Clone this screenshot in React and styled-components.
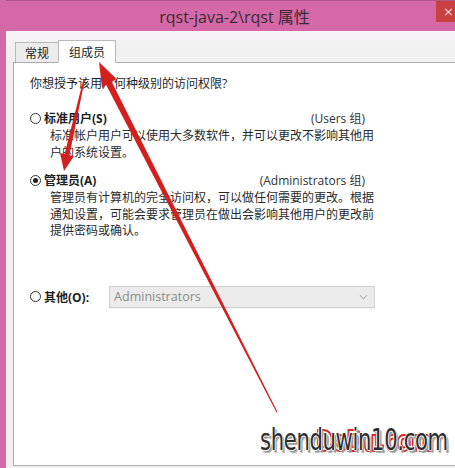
import React from 'react';
import styled, { createGlobalStyle } from 'styled-components';

const GlobalStyle = createGlobalStyle`
  html, body {
    margin: 0;
    padding: 0;
    width: 455px;
    height: 468px;
    overflow: hidden;
  }
  body {
    font-family: "Open Sans", "Noto Sans CJK SC", sans-serif;
    font-size: 12px;
    color: #1e1e1e;
  }
`;

const font = `"Open Sans", "Noto Sans CJK SC", sans-serif`;

const App = () => {
  return (
    <>
      <GlobalStyle />
      <Window>
        <TitleBar>
          <Title>rqst-java-2\rqst 属性</Title>
          <CloseButton>×</CloseButton>
        </TitleBar>
        <Client>
          <Tabs>
            <Tab>常规</Tab>
            <Tab $active>组成员</Tab>
          </Tabs>
          <Panel>
            <Question>你想授予该用户何种级别的访问权限?</Question>

            <Option>
              <OptionHead>
                <Radio />
                <Label>标准用户(S)</Label>
                <Group>(Users 组)</Group>
              </OptionHead>
              <Desc>
                标准帐户用户可以使用大多数软件，并可以更改不影响其他用
                <br />
                户的系统设置。
              </Desc>
            </Option>

            <Option $top={10}>
              <OptionHead>
                <Radio $checked />
                <Label>管理员(A)</Label>
                <Group>(Administrators 组)</Group>
              </OptionHead>
              <Desc>
                管理员有计算机的完全访问权，可以做任何需要的更改。根据
                <br />
                通知设置，可能会要求管理员在做出会影响其他用户的更改前
                <br />
                提供密码或确认。
              </Desc>
            </Option>

            <OtherRow>
              <Radio />
              <Label>其他(O):</Label>
              <Select>
                <span>Administrators</span>
                <Chevron viewBox="0 0 10 6">
                  <path d="M1 1l4 4 4-4" fill="none" stroke="#b5b5b5" strokeWidth="1.2" />
                </Chevron>
              </Select>
            </OtherRow>
          </Panel>
        </Client>

        <Arrows viewBox="0 0 455 468">
          <polygon
            fill="#d41f1f"
            points="99,62 116.5,79 111.8,82 277.5,412 276.5,412.5 106.2,85 102,88"
          />
          <polygon
            fill="#d41f1f"
            points="64,171 60,153 64.6,154 83.3,80 84.7,80.3 69.4,155.2 74,156"
          />
        </Arrows>

        <Watermark>
          <Shadow>DeDu.com</Shadow>
          <Mark>shenduwin10.com</Mark>
        </Watermark>
      </Window>
    </>
  );
};

const Window = styled.div`
  position: relative;
  width: 455px;
  height: 468px;
  display: flex;
  flex-direction: column;
  background: #d568a6;
  padding-left: 6px;
  box-sizing: border-box;
  overflow: hidden;
`;

const TitleBar = styled.div`
  height: 31px;
  flex-shrink: 0;
  display: flex;
  align-items: center;
  justify-content: center;
  position: relative;
  border-top: 1px solid #b0548a;
  box-sizing: border-box;
`;

const Title = styled.div`
  font-family: "Open Sans", "Noto Sans CJK SC", sans-serif;
  font-size: 16px;
  color: #3a2a35;
  margin-left: 8px;
`;

const CloseButton = styled.div`
  position: absolute;
  right: 0;
  top: 0;
  width: 18px;
  height: 21px;
  background: #c8413e;
  color: #f4d8d8;
  font-family: "DejaVu Sans", sans-serif;
  font-size: 13px;
  display: flex;
  align-items: center;
  justify-content: flex-end;
  padding-right: 1px;
`;

const Client = styled.div`
  flex: 1;
  background: linear-gradient(#f7f5f7, #f0f0f0 20px);
  padding: 9px 0 2px 7px;
  display: flex;
  flex-direction: column;
`;

const Tabs = styled.div`
  display: flex;
  align-items: flex-end;
  height: 22px;
  padding-left: 2px;
  position: relative;
  z-index: 1;
`;

const Tab = styled.div`
  font-family: ${font};
  font-size: 12px;
  height: ${({ $active }) => ($active ? '23px' : '20px')};
  padding: 0 ${({ $active }) => ($active ? '10px' : '9px')};
  display: flex;
  align-items: center;
  box-sizing: border-box;
  border: 1px solid #b9b9b9;
  border-bottom: ${({ $active }) => ($active ? '1px solid #fff' : 'none')};
  margin-bottom: ${({ $active }) => ($active ? '-1px' : '0')};
  background: ${({ $active }) => ($active ? '#fff' : '#ececec')};
  margin-left: ${({ $active }) => ($active ? '-1px' : '0')};
  color: #1e1e1e;
`;

const Panel = styled.div`
  flex: 1;
  background: #fff;
  border: 1px solid #adadad;
  border-right: none;
  padding: 13px 0 0 16px;
  display: flex;
  flex-direction: column;
`;

const Question = styled.div`
  font-family: ${font};
  font-size: 12px;
  line-height: 16px;
`;

const Option = styled.div`
  margin-top: ${({ $top }) => ($top ?? 17)}px;
  width: 335px;
`;

const OptionHead = styled.div`
  display: flex;
  align-items: center;
  height: 18px;
`;

const Radio = styled.span`
  width: 11px;
  height: 11px;
  border: 1px solid #333;
  border-radius: 50%;
  box-sizing: border-box;
  margin-right: 3px;
  flex-shrink: 0;
  display: flex;
  align-items: center;
  justify-content: center;
  &::after {
    content: '';
    width: 5px;
    height: 5px;
    border-radius: 50%;
    background: ${({ $checked }) => ($checked ? '#222' : 'transparent')};
  }
`;

const Label = styled.span`
  font-family: ${font};
  font-size: 12px;
  font-weight: 700;
`;

const Group = styled.span`
  margin-left: auto;
  font-family: ${font};
  font-size: 12px;
  color: #333;
`;

const Desc = styled.div`
  font-family: ${font};
  font-size: 12px;
  line-height: 16.5px;
  padding-left: 20px;
  margin-top: 1px;
  color: #2a2a2a;
  white-space: nowrap;
`;

const OtherRow = styled.div`
  margin-top: 46px;
  display: flex;
  align-items: center;
`;

const Select = styled.div`
  margin-left: 20px;
  width: 266px;
  height: 22px;
  box-sizing: border-box;
  border: 1px solid #d0d0d0;
  background: #ebebeb;
  display: flex;
  align-items: center;
  justify-content: space-between;
  padding: 0 6px 0 4px;
  font-family: ${font};
  font-size: 12.5px;
  color: #8c8c8c;
  box-shadow: 0 1px 0 #f4f4f4;
`;

const Chevron = styled.svg`
  width: 9px;
  height: 6px;
`;

const Arrows = styled.svg`
  position: absolute;
  left: 0;
  top: 0;
  width: 455px;
  height: 468px;
  pointer-events: none;
  z-index: 2;
`;

const Watermark = styled.div`
  position: absolute;
  left: 258px;
  top: 420px;
  width: 197px;
  height: 40px;
  z-index: 3;
  overflow: hidden;
`;

const Shadow = styled.div`
  position: absolute;
  left: 58px;
  top: 5px;
  font-family: "DejaVu Sans Condensed", "DejaVu Sans", sans-serif;
  font-weight: 700;
  font-size: 28px;
  color: transparent;
  -webkit-text-stroke: 2px #d42a2a;
  transform: scaleX(0.8);
  transform-origin: left top;
  white-space: nowrap;
`;

const Mark = styled.div`
  position: absolute;
  left: 2px;
  top: 1px;
  font-family: "DejaVu Sans Condensed", "DejaVu Sans", sans-serif;
  font-size: 31px;
  color: #2e2e2e;
  white-space: nowrap;
  transform: scaleX(0.76);
  transform-origin: left top;
  letter-spacing: -0.5px;
  text-shadow:
    1px 0 0 #fff, -1px 0 0 #fff, 0 1px 0 #fff, 0 -1px 0 #fff,
    2px 2px 0 #999, 3px 3px 1px #aaa;
`;

export default App;
